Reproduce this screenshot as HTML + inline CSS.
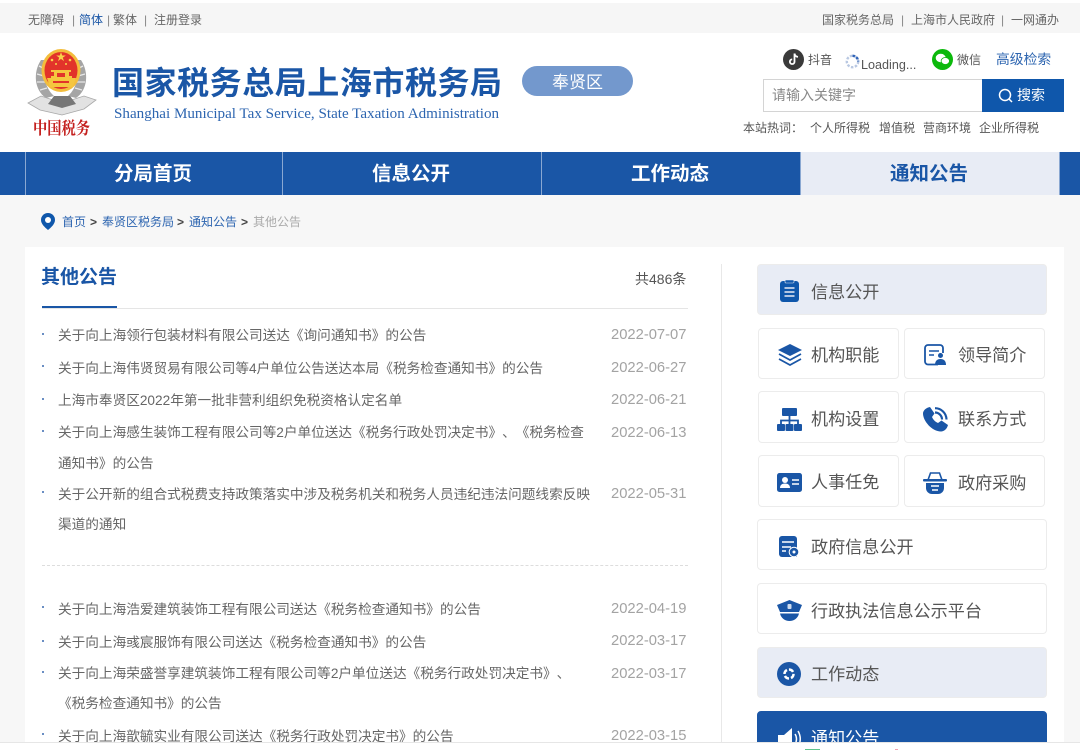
<!DOCTYPE html>
<html lang="zh"><head><meta charset="utf-8"><title>其他公告</title>
<style>
*{margin:0;padding:0;box-sizing:border-box}
html,body{width:1080px;height:750px;overflow:hidden;background:#fff}
body{position:relative;font-family:"Liberation Sans","Noto Sans CJK SC",sans-serif;color:#555;text-spacing-trim:space-all}
.a{position:absolute;white-space:nowrap}
.t{font-size:12px;line-height:16px;color:#666}
.nav{position:absolute;top:152px;height:43px;background:#1a56a6;border-left:1px solid #8aa8d2;color:#fff;font-size:19.500px;font-weight:bold;line-height:45px;text-align:center;padding-right:2px}
.li{position:absolute;left:58px;font-size:13.650px;line-height:16px;color:#666;white-space:nowrap}
.dot{position:absolute;left:42px;width:2px;height:2px;background:#3a6ab0;border-radius:50%}
.dt{position:absolute;left:611px;font-size:14.750px;line-height:16px;color:#a3a3a3;white-space:nowrap}
.b{position:absolute;border:1px solid #ececec;border-radius:4px;background:#fff;font-size:17.100px;color:#555;line-height:53px;white-space:nowrap;overflow:hidden}
.b span{position:absolute;left:53px;top:0}
.b svg{position:absolute}
</style></head><body>
<div class="a" style="left:0;top:3px;width:1080px;height:30px;background:#f6f6f6"></div>
<div class="a t" style="left:28px;top:12px">无障碍</div>
<div class="a t" style="left:72px;top:12px;color:#888">|</div>
<div class="a t" style="left:79px;top:12px;color:#1a56a6">简体</div>
<div class="a t" style="left:107px;top:12px;color:#888">|</div>
<div class="a t" style="left:113px;top:12px">繁体</div>
<div class="a t" style="left:144px;top:12px;color:#888">|</div>
<div class="a t" style="left:154px;top:12px">注册登录</div>
<div class="a t" style="left:822px;top:12px">国家税务总局</div>
<div class="a t" style="left:901px;top:12px;color:#888">|</div>
<div class="a t" style="left:911px;top:12px">上海市人民政府</div>
<div class="a t" style="left:1001px;top:12px;color:#888">|</div>
<div class="a t" style="left:1011px;top:12px">一网通办</div>

<svg class="a" style="left:26px;top:46px" width="72" height="94" viewBox="0 0 72 94">
<path d="M15 14C7 26 8 44 20 52L28 50C19 42 16 28 20 14Z" fill="#a5a5a5"/>
<path d="M55 14C63 26 62 44 50 52L42 50C51 42 54 28 50 14Z" fill="#a5a5a5"/>
<path d="M13 20l6 3M11 28l7 2M11 36l8 0M14 44l7-2M57 20l-6 3M59 28l-7 2M59 36l-8 0M56 44l-7-2" stroke="#e8e8e8" stroke-width="1.300"/>
<path d="M2 57L15 50L36 57L58 50L70 54L58 63L36 69L14 64Z" fill="#e2e2e2" stroke="#a8a8a8" stroke-width=".8"/>
<path d="M22 58L36 62L50 58L44 50H28Z" fill="#777"/>
<ellipse cx="35" cy="24.500" rx="19.500" ry="21.500" fill="#f3bd3c"/>
<ellipse cx="35" cy="24.500" rx="16.500" ry="18.500" fill="#e2332a"/>
<path d="M35 6l1.200 3.500h3.600l-3 2.100 1.200 3.500-3-2.200-3 2.200 1.200-3.500-3-2.100h3.600z" fill="#f8d24a"/>
<circle cx="26" cy="14" r="1.300" fill="#f8d24a"/><circle cx="44" cy="14" r="1.300" fill="#f8d24a"/><circle cx="30" cy="18" r="1" fill="#f8d24a"/><circle cx="40" cy="18" r="1" fill="#f8d24a"/>
<path d="M25 24h20v2h-2v4h3v2h4l-3 9H24l-3-9h4v-2h3v-4h-3z" fill="#f5c63f"/>
<path d="M31 27h8v4h-8zM27 35h16v2H27z" fill="#e2332a"/>
<text x="7" y="88" font-size="17" font-weight="bold" fill="#c4201e" font-family="'Noto Serif CJK SC',serif" textLength="57" lengthAdjust="spacingAndGlyphs">中国税务</text>
</svg>
<div class="a" style="left:112px;top:64px;font-size:32px;line-height:38px;font-weight:bold;color:#1a56a6;letter-spacing:.55px">国家税务总局上海市税务局</div>
<div class="a" style="left:114px;top:105px;font-family:'Liberation Serif',serif;font-size:15.100px;line-height:18px;color:#2d65b0">Shanghai Municipal Tax Service, State Taxation Administration</div>
<div class="a" style="left:522px;top:66px;width:111px;height:30px;border-radius:15px;background:#7398cd;color:#fff;text-align:center;font-size:17px;line-height:33px">奉贤区</div>

<svg class="a" style="left:783px;top:49px" width="21" height="21" viewBox="0 0 21 21"><circle cx="10.500" cy="10.500" r="10.500" fill="#3a3a3a"/><path d="M11.500 4.500v8.200a2.300 2.300 0 1 1-2.300-2.300M11.500 4.500c.3 2 1.700 3.200 3.500 3.400" fill="none" stroke="#fff" stroke-width="1.800"/></svg>
<div class="a t" style="left:808px;top:52px;color:#555">抖音</div>
<svg class="a" style="left:845px;top:54px" width="15" height="15" viewBox="0 0 15 15"><circle cx="7.500" cy="7.500" r="5.700" fill="none" stroke="#b9c8e2" stroke-width="2.400" stroke-dasharray="2.500 1.500"/><path d="M7.500 1.800a5.700 5.700 0 0 1 5.700 5.700" fill="none" stroke="#2f63b8" stroke-width="2.400" stroke-dasharray="2.500 1.500"/></svg>
<div class="a" style="left:861px;top:57px;font-size:12.600px;line-height:16px;color:#555">Loading...</div>
<svg class="a" style="left:932px;top:49px" width="21" height="21" viewBox="0 0 21 21"><circle cx="10.500" cy="10.500" r="10.500" fill="#0cb90c"/><ellipse cx="8.700" cy="9" rx="5" ry="4.200" fill="#fff"/><ellipse cx="13.300" cy="12" rx="4.200" ry="3.500" fill="#fff" stroke="#0cb90c" stroke-width=".8"/></svg>
<div class="a t" style="left:957px;top:52px;color:#555">微信</div>
<div class="a" style="left:996px;top:51px;font-size:13.800px;line-height:18px;color:#2d65b0">高级检索</div>
<div class="a" style="left:763px;top:79px;width:220px;height:33px;border:1px solid #d4d4d4;background:#fff;font-size:14px;line-height:30px;padding-left:8px;color:#888">请输入关键字</div>
<div class="a" style="left:982px;top:79px;width:82px;height:33px;background:#0f57ab;color:#fff;font-size:14px;line-height:33px;padding-left:35px">搜索</div>
<svg class="a" style="left:998px;top:88px" width="16" height="16" viewBox="0 0 16 16"><circle cx="7" cy="7" r="5.500" fill="none" stroke="#fff" stroke-width="1.500"/><path d="M11 11l3 3" stroke="#fff" stroke-width="1.500"/></svg>
<div class="a t" style="left:743px;top:120px;color:#555">本站热词：</div>
<div class="a t" style="left:810px;top:120px;color:#555">个人所得税</div>
<div class="a t" style="left:879px;top:120px;color:#555">增值税</div>
<div class="a t" style="left:923px;top:120px;color:#555">营商环境</div>
<div class="a t" style="left:979px;top:120px;color:#555">企业所得税</div>

<div class="a" style="left:0;top:152px;width:1080px;height:43px;background:#1a56a6"></div>
<div class="nav" style="left:25px;width:257px">分局首页</div>
<div class="nav" style="left:282px;width:259px">信息公开</div>
<div class="nav" style="left:541px;width:259px">工作动态</div>
<div class="nav" style="left:800px;width:260px;background:#e8ecf5;color:#1a56a6;border-right:1px solid #8aa8d2">通知公告</div>

<div class="a" style="left:0;top:195px;width:1080px;height:547px;background:#f7f7f7"></div>
<svg class="a" style="left:41px;top:213px" width="14" height="17" viewBox="0 0 14 17"><path d="M7 0a7 7 0 0 1 7 7c0 4-4 7.500-7 10-3-2.500-7-6-7-10a7 7 0 0 1 7-7z" fill="#0f57ab"/><circle cx="7" cy="7" r="3" fill="#fff"/></svg>
<div class="a t" style="left:62px;top:214px;color:#2d65b0">首页</div>
<div class="a t" style="left:90px;top:214px;color:#444;font-weight:bold">&gt;</div>
<div class="a t" style="left:102px;top:214px;color:#2d65b0">奉贤区税务局</div>
<div class="a t" style="left:177px;top:214px;color:#444;font-weight:bold">&gt;</div>
<div class="a t" style="left:189px;top:214px;color:#2d65b0">通知公告</div>
<div class="a t" style="left:241px;top:214px;color:#444;font-weight:bold">&gt;</div>
<div class="a t" style="left:253px;top:214px;color:#aaa">其他公告</div>

<div class="a" style="left:25px;top:247px;width:1039px;height:495px;background:#fff"></div>
<div class="a" style="left:41px;top:266px;font-size:19px;line-height:24px;font-weight:bold;color:#1a56a6">其他公告</div>
<div class="a" style="left:635px;top:270px;font-size:14px;line-height:18px;color:#555">共486条</div>
<div class="a" style="left:42px;top:308px;width:646px;height:1px;background:#e5e5e5"></div>
<div class="a" style="left:42px;top:306px;width:75px;height:2px;background:#1a56a6"></div>
<div class="a" style="left:721px;top:264px;width:1px;height:478px;background:#e8e8e8"></div>

<i class="dot" style="top:333px"></i><div class="li" style="top:328px">关于向上海领行包装材料有限公司送达《询问通知书》的公告</div><div class="dt" style="top:327px">2022-07-07</div>
<i class="dot" style="top:365px"></i><div class="li" style="top:361px">关于向上海伟贤贸易有限公司等4户单位公告送达本局《税务检查通知书》的公告</div><div class="dt" style="top:360px">2022-06-27</div>
<i class="dot" style="top:398px"></i><div class="li" style="top:393px">上海市奉贤区2022年第一批非营利组织免税资格认定名单</div><div class="dt" style="top:392px">2022-06-21</div>
<i class="dot" style="top:430px"></i><div class="li" style="top:425px">关于向上海感生装饰工程有限公司等2户单位送达《税务行政处罚决定书》、《税务检查</div><div class="dt" style="top:425px">2022-06-13</div>
<div class="li" style="top:456px">通知书》的公告</div>
<i class="dot" style="top:491px"></i><div class="li" style="top:487px">关于公开新的组合式税费支持政策落实中涉及税务机关和税务人员违纪违法问题线索反映</div><div class="dt" style="top:486px">2022-05-31</div>
<div class="li" style="top:517px">渠道的通知</div>
<div class="a" style="left:42px;top:565px;width:646px;border-top:1px dashed #ddd"></div>
<i class="dot" style="top:606px"></i><div class="li" style="top:602px">关于向上海浩爱建筑装饰工程有限公司送达《税务检查通知书》的公告</div><div class="dt" style="top:601px">2022-04-19</div>
<i class="dot" style="top:640px"></i><div class="li" style="top:635px">关于向上海彧宸服饰有限公司送达《税务检查通知书》的公告</div><div class="dt" style="top:633px">2022-03-17</div>
<i class="dot" style="top:671px"></i><div class="li" style="top:666px">关于向上海荣盛誉享建筑装饰工程有限公司等2户单位送达《税务行政处罚决定书》、</div><div class="dt" style="top:666px">2022-03-17</div>
<div class="li" style="top:696px">《税务检查通知书》的公告</div>
<i class="dot" style="top:733px"></i><div class="li" style="top:729px">关于向上海歆毓实业有限公司送达《税务行政处罚决定书》的公告</div><div class="dt" style="top:728px">2022-03-15</div>

<div class="b" style="left:757px;top:264px;width:290px;height:51px;background:#e8ecf5"><span style="top:1px">信息公开</span>
<svg style="left:22px;top:15px" width="19" height="22" viewBox="0 0 19 22"><rect width="19" height="21" y="1" rx="3" fill="#0f57ab"/><rect x="5" y="0" width="9" height="3" rx="1" fill="#0f57ab" stroke="#e8ecf5" stroke-width=".6"/><path d="M4.500 8h10M4.500 12h10M4.500 16h10" stroke="#e8ecf5" stroke-width="1.600"/></svg></div>

<div class="b" style="left:758px;top:328px;width:141px;height:51px"><span style="left:52px">机构职能</span>
<svg style="left:19px;top:15px" width="24" height="22" viewBox="0 0 24 22"><path d="M12 0l12 6-12 6L0 6z" fill="#1a56a6"/><path d="M1 10l11 6 11-6M1 15l11 6 11-6" fill="none" stroke="#1a56a6" stroke-width="1.700"/></svg></div>
<div class="b" style="left:904px;top:328px;width:141px;height:51px"><span>领导简介</span>
<svg style="left:19px;top:15px" width="23" height="22" viewBox="0 0 23 22"><path d="M14 20.500H4a3 3 0 0 1-3-3V4a3 3 0 0 1 3-3h12a3 3 0 0 1 3 3v5" fill="none" stroke="#1a56a6" stroke-width="1.800"/><path d="M5 7h10M5 11h5" stroke="#1a56a6" stroke-width="1.600"/><circle cx="16.500" cy="11.500" r="2.500" fill="#1a56a6"/><path d="M11 21c0-4 2-6 5.500-6s5.500 2 5.500 6z" fill="#1a56a6"/></svg></div>
<div class="b" style="left:758px;top:391px;width:141px;height:52px"><span style="left:52px;top:1px">机构设置</span>
<svg style="left:18px;top:16px" width="25" height="23" viewBox="0 0 25 23"><rect x="5" y="0" width="15" height="8" rx="1" fill="#1a56a6"/><path d="M12.500 8v8M4 16v-3.500h17V16" fill="none" stroke="#1a56a6" stroke-width="1.800"/><rect x="0" y="16" width="8" height="7" rx="1" fill="#1a56a6"/><rect x="8.500" y="16" width="8" height="7" rx="1" fill="#1a56a6"/><rect x="17" y="16" width="8" height="7" rx="1" fill="#1a56a6"/></svg></div>
<div class="b" style="left:904px;top:391px;width:141px;height:52px"><span style="top:1px">联系方式</span>
<svg style="left:18px;top:15px" width="25" height="25" viewBox="0 0 25 25"><path d="M7 0l4.500 6.500L9 10c1 2.500 3.500 5 6 6l3.500-2.500L25 18c-1 4-4 6.500-7 6.500C9 24.500 0 14 0 6.500 0 3.500 3 .8 7 0z" fill="#1a56a6"/><path d="M12 5.500a7 7 0 0 1 7 7M12 1.200a11.500 11.500 0 0 1 11.500 11.300" fill="none" stroke="#1a56a6" stroke-width="2.200"/></svg></div>
<div class="b" style="left:758px;top:455px;width:141px;height:52px"><span style="left:52px">人事任免</span>
<svg style="left:18px;top:17px" width="25" height="19" viewBox="0 0 25 19"><rect width="25" height="19" rx="2.500" fill="#1a56a6"/><circle cx="8" cy="7" r="3" fill="#fff"/><path d="M3 15c0-3 2-4.500 5-4.500s5 1.500 5 4.500z" fill="#fff"/><path d="M15 7h7M15 11h7" stroke="#fff" stroke-width="1.600"/></svg></div>
<div class="b" style="left:904px;top:455px;width:141px;height:52px"><span style="top:1px">政府采购</span>
<svg style="left:18px;top:16px" width="24" height="22" viewBox="0 0 24 22"><path d="M5 8L7.500 1h9L19 8" fill="none" stroke="#1a56a6" stroke-width="1.600"/><rect x="0" y="7" width="24" height="2.500" rx="1" fill="#1a56a6"/><path d="M3 11h18v5a6 6 0 0 1-6 6H9a6 6 0 0 1-6-6z" fill="#1a56a6"/><path d="M8 14h8M9 18h6" stroke="#fff" stroke-width="1.500"/></svg></div>
<div class="b" style="left:757px;top:519px;width:290px;height:51px"><span style="top:1px">政府信息公开</span>
<svg style="left:21px;top:16px" width="20" height="21" viewBox="0 0 20 21"><path d="M3 0h12a3 3 0 0 1 3 3v18H3a3 3 0 0 1-3-3V3a3 3 0 0 1 3-3z" fill="#1a56a6"/><path d="M3 6h12M3 11h9M3 15h4" stroke="#fff" stroke-width="1.500"/><circle cx="15" cy="16" r="4.800" fill="#1a56a6" stroke="#fff" stroke-width="1"/><circle cx="15" cy="16" r="1.500" fill="#fff"/></svg></div>
<div class="b" style="left:757px;top:583px;width:290px;height:51px"><span style="top:1px">行政执法信息公示平台</span>
<svg style="left:19px;top:16px" width="25" height="21" viewBox="0 0 25 21"><path d="M12.500 0L25 5l-3 7H3L0 5z" fill="#1a56a6"/><rect x="10.500" y="4" width="4" height="5" rx="1" fill="#cfdcee"/><path d="M3 13.500h19C21 18 17 21 12.500 21S4 18 3 13.500z" fill="#1a56a6"/></svg></div>
<div class="b" style="left:757px;top:647px;width:290px;height:51px;background:#e8ecf5"><span>工作动态</span>
<svg style="left:19px;top:14px" width="24" height="24" viewBox="0 0 24 24"><circle cx="12" cy="12" r="12" fill="#1a56a6"/><circle cx="12" cy="12" r="4.500" fill="none" stroke="#fff" stroke-width="2.500" stroke-dasharray="5 2"/></svg></div>
<div class="b" style="left:757px;top:711px;width:290px;height:51px;background:#1a56a6;border-color:#1a56a6;color:#fff"><span>通知公告</span>
<svg style="left:20px;top:15px" width="24" height="24" viewBox="0 0 24 24"><path d="M0 8h6l8-7v22l-8-6H0z" fill="#fff"/><path d="M17 7c2 3 2 7 0 10M20 4c3 5 3 11 0 16" fill="none" stroke="#fff" stroke-width="1.500"/></svg></div>

<div class="a" style="left:0;top:742px;width:1080px;height:8px;background:#fff;border-top:1px solid #e6e6e6"></div>
<div class="a" style="left:805px;top:749px;width:15px;height:1px;background:#5fc48a"></div>
<div class="a" style="left:895px;top:749px;width:3px;height:1px;background:#f2a0b0"></div>
</body></html>
